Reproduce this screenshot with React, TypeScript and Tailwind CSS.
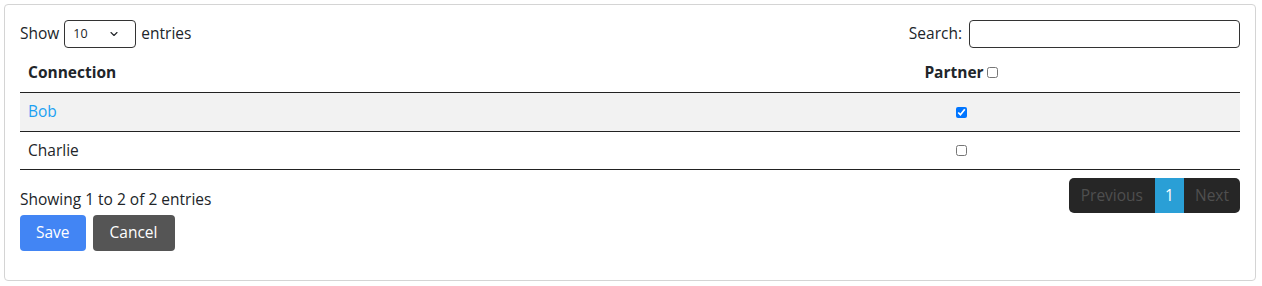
import { ChevronDown } from 'lucide-react';

type Connection = {
    name: string,
    partner: boolean,
    link: boolean,
}

const connections: Connection[] = [
    { name: 'Bob', partner: true, link: true },
    { name: 'Charlie', partner: false, link: false },
];

export default function App() {
    return (
        <div className="pt-1 pl-1 pr-[6px] bg-white text-[15.5px] text-[#212529]" style={{ fontFamily: '"Open Sans", "Liberation Sans", sans-serif' }}>
            <div className="border border-[#d4d4d4] rounded-[4px] px-[15px] pt-[15px] pb-[29px]">

                {/* top controls */}
                <div className="flex justify-between items-center h-[28px]">
                    <div className="flex items-center">
                        <span>Show</span>
                        <div className="relative ml-[5px] mr-[5px]">
                            <select className="appearance-none w-[72px] h-[28px] border border-[#333] rounded-[4px] pl-[8px] text-[12.5px] bg-white focus:outline-none">
                                <option>10</option>
                                <option>25</option>
                                <option>50</option>
                                <option>100</option>
                            </select>
                            <ChevronDown className="absolute right-[16px] top-[8px] w-[12px] h-[12px] pointer-events-none" strokeWidth={2.2} />
                        </div>
                        <span>entries</span>
                    </div>
                    <label className="flex items-center gap-[7px]">
                        Search:
                        <input type="search" className="w-[271px] h-[28px] border border-[#333] rounded-[4px] px-2 focus:outline-none" />
                    </label>
                </div>

                {/* table */}
                <div className="mt-[5px]">
                    <div className="grid grid-cols-[662px_1fr] h-[40px] items-center border-b border-[#222] font-bold">
                        <div className="px-2">Connection</div>
                        <div className="flex items-center justify-center">
                            Partner
                            <input type="checkbox" className="ml-[3px] w-[11px] h-[11px]" />
                        </div>
                    </div>
                    {connections.map((c, i) => (
                        <div
                            key={c.name}
                            className={i === 0
                                ? "grid grid-cols-[662px_1fr] h-[39px] items-center border-b border-[#222] bg-[#f2f2f2]"
                                : "grid grid-cols-[662px_1fr] h-[38px] items-center border-b border-[#222]"}
                        >
                            <div className={c.link ? "px-2 text-[#1da1f2]" : "px-2"}>{c.name}</div>
                            <div className="flex justify-center">
                                <input type="checkbox" defaultChecked={c.partner} className="w-[11px] h-[11px]" />
                            </div>
                        </div>
                    ))}
                </div>

                {/* footer */}
                <div className="flex justify-between mt-2">
                    <div className="pt-[11px] leading-[21px]">Showing 1 to 2 of 2 entries</div>
                    <div className="flex h-[35px] rounded-[5px] bg-[#262626] overflow-hidden text-[#4f4f4f]">
                        <span className="flex items-center px-[12px]">Previous</span>
                        <span className="flex items-center justify-center w-[29px] bg-[#2a9fd6] text-white">1</span>
                        <span className="flex items-center px-[11px]">Next</span>
                    </div>
                </div>

                <div className="flex gap-[7px] mt-[2px]">
                    <button className="h-[36px] px-4 rounded-[4px] bg-[#4285f4] text-white">Save</button>
                    <button className="h-[36px] px-[17px] rounded-[4px] bg-[#555] text-white">Cancel</button>
                </div>
            </div>
        </div>
    );
}
